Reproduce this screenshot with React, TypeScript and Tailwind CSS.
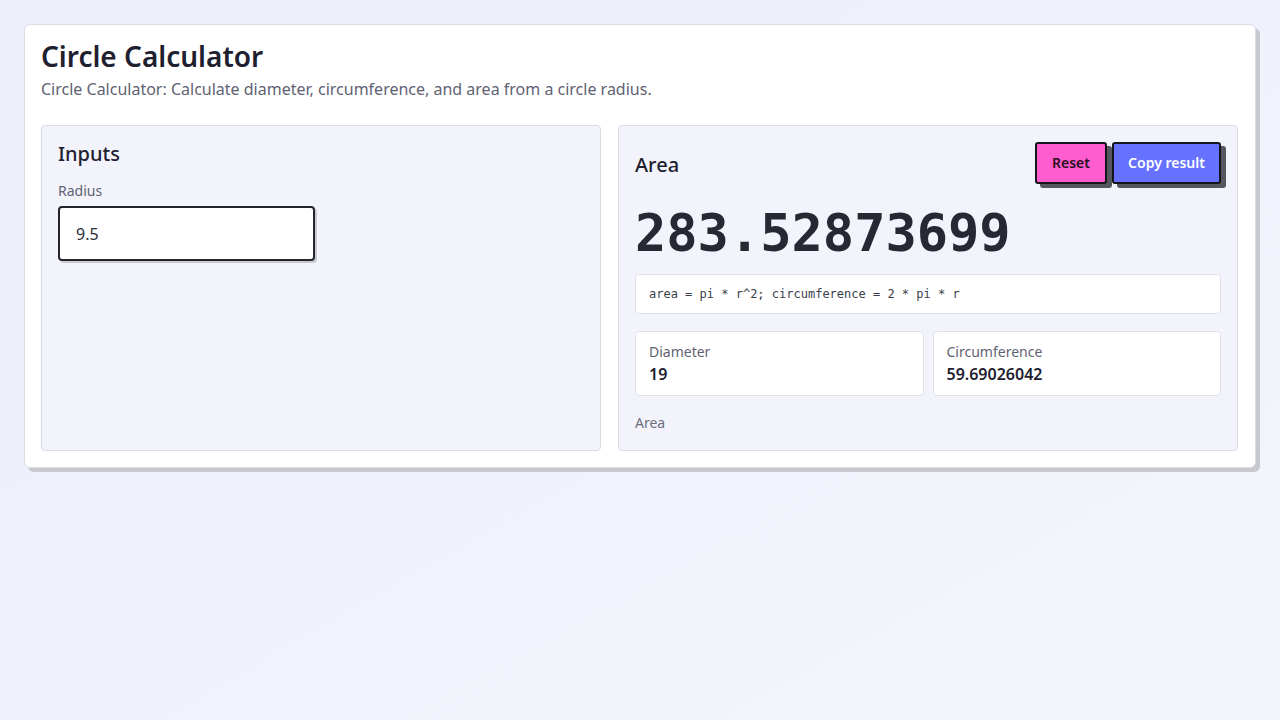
import { useState } from 'react';

const sans = "font-['Noto_Sans','Lato',sans-serif]";

const App = () => {
  const [radius, setRadius] = useState('9.5');
  const r = parseFloat(radius) || 0;
  const area = Math.PI * r * r;
  const circumference = 2 * Math.PI * r;
  const fmt = (n: number) => String(parseFloat(n.toFixed(8)));

  return (
    <main className={`min-h-screen bg-gradient-to-br from-[#eceef8] to-[#f4f5fd] p-6 ${sans}`}>
      {/* outer card */}
      <div className="w-[1232px] rounded-md border border-[#dcdde6] bg-white px-4 pt-[14px] pb-4 shadow-[4px_4px_0_#c8c9cf]">
        <h1 className="text-[28px] font-semibold leading-[34px] text-[#1e2030]">Circle Calculator</h1>
        <p className="mt-[4px] text-base leading-6 text-[#5f6272]">
          Circle Calculator: Calculate diameter, circumference, and area from a circle radius.
        </p>

        <div className="mt-[24px] grid grid-cols-[560px_620px] gap-[17px]">
          {/* inputs */}
          <section className="h-[326px] rounded border border-[#d8dae4] bg-[#f3f4fb] px-4 pt-[14px]">
            <h2 className="text-xl font-medium leading-7 text-[#1e2030]">Inputs</h2>
            <label className="mt-[13px] block text-sm leading-5 text-[#5f6272]">Radius</label>
            <input
              value={radius}
              onChange={(e) => setRadius(e.target.value)}
              className="mt-[5px] block h-[55px] w-[257px] rounded border-2 border-[#23242c] bg-white px-4 text-base text-[#2a2c38] shadow-[2px_2px_0_#c9cad0] outline-none"
            />
          </section>

          {/* result */}
          <section className="h-[326px] rounded border border-[#d8dae4] bg-[#f3f4fb] px-4 pt-4">
            <div className="flex items-center justify-between">
              <h2 className="pt-[3px] text-xl font-medium leading-7 text-[#1e2030]">Area</h2>
              <div className="flex gap-[5px]">
                <button className="h-[42px] w-[72px] rounded-[3px] border-2 border-[#15161c] bg-[#ff5ccf] text-sm font-semibold text-[#2a1020] shadow-[5px_4px_0_#55565e]">
                  Reset
                </button>
                <button className="h-[42px] w-[109px] rounded-[3px] border-2 border-[#15161c] bg-[#6672ff] text-sm font-semibold text-white shadow-[5px_4px_0_#55565e]">
                  Copy result
                </button>
              </div>
            </div>

            <div className="mt-[17px] font-['DejaVu_Sans_Mono',monospace] text-[52px] font-bold leading-[64px] text-[#262833]">
              {fmt(area)}
            </div>

            <div className="mt-[9px] flex h-[40px] items-center rounded border border-[#dfe1ea] bg-white px-[13px] font-['DejaVu_Sans_Mono',monospace] text-xs text-[#3c3e4a]">
              area = pi * r^2; circumference = 2 * pi * r
            </div>

            <div className="mt-[17px] grid grid-cols-2 gap-[9px]">
              <div className="h-[65px] rounded border border-[#dfe1ea] bg-white px-[13px] pt-[10px]">
                <div className="text-sm leading-5 text-[#5f6272]">Diameter</div>
                <div className="text-base font-semibold leading-6 text-[#1e2030]">{fmt(r * 2)}</div>
              </div>
              <div className="h-[65px] rounded border border-[#dfe1ea] bg-white px-[13px] pt-[10px]">
                <div className="text-sm leading-5 text-[#5f6272]">Circumference</div>
                <div className="text-base font-semibold leading-6 text-[#1e2030]">{fmt(circumference)}</div>
              </div>
            </div>

            <div className="mt-[17px] text-sm leading-5 text-[#6b6e7e]">Area</div>
          </section>
        </div>
      </div>
    </main>
  );
};

export default App;
